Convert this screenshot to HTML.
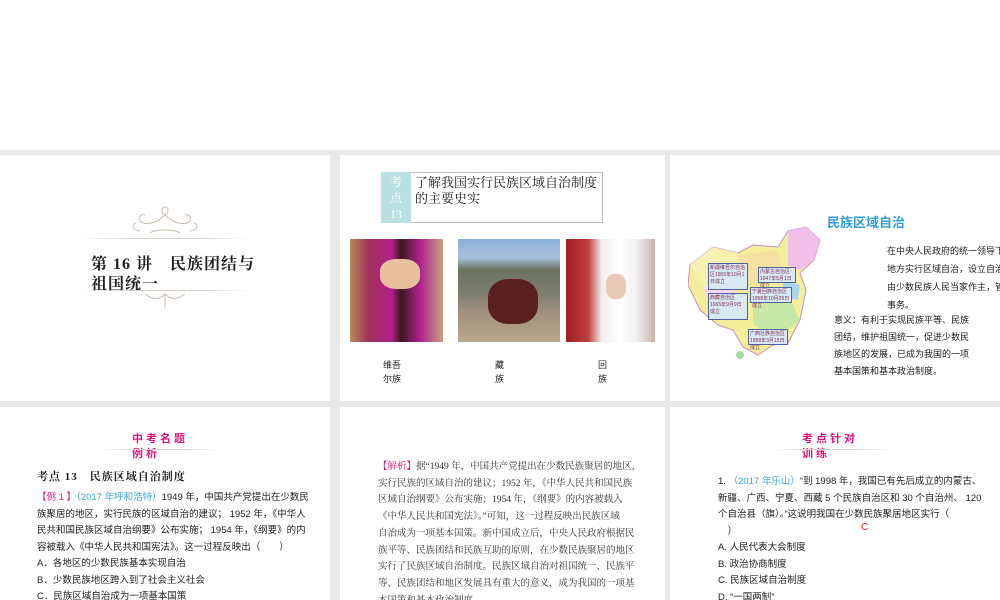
<!DOCTYPE html>
<html><head><meta charset="utf-8"><style>
*{margin:0;padding:0;box-sizing:border-box}
body{width:1000px;height:600px;background:#e8e8e8;position:relative;overflow:hidden;font-family:"Liberation Sans","Noto Sans CJK SC",sans-serif;color:#222}
.s{position:absolute;background:#fff;overflow:hidden}
.a{position:absolute;white-space:nowrap}
.serif{font-family:"Liberation Serif","Noto Serif CJK SC",serif}
.line{position:absolute;height:1px;background:linear-gradient(90deg,transparent,#d8cfc4 30%,#d8cfc4 70%,transparent)}
.mag{color:#e0157a;font-weight:bold;letter-spacing:3px}
.bx{position:absolute;border:1px solid #5060a0;background:#d8e8f4;font-size:5px;color:#803050;line-height:7px;padding:1px;white-space:normal}
</style></head><body>
<div class="s" style="left:0;top:0;width:1000px;height:150px"></div>

<!-- slide 1 -->
<div class="s" style="left:0;top:155px;width:330px;height:246px">
  <svg class="a" style="left:120px;top:48px" width="90" height="35" viewBox="0 0 90 35" fill="none" stroke="#c9bcb0" stroke-width="1">
    <path d="M45 4c-4 0-4 6 0 8c4-2 4-8 0-8M45 12c-6 6-14 10-22 8c-6-2-4-10 2-8M45 12c6 6 14 10 22 8c6-2 4-10-2-8M20 28c-6 0-10-6-4-8M70 28c6 0 10-6 4-8M30 30c5-4 25-4 30 0"/>
  </svg>
  <div class="line" style="left:80px;top:83px;width:172px"></div>
  <div class="a serif" style="left:91px;top:96px;font-size:16px;font-weight:bold;letter-spacing:1px">第 16 讲　民族团结与</div>
  <div class="a serif" style="left:91px;top:116px;font-size:16px;font-weight:bold;letter-spacing:1px">祖国统一</div>
  <div class="line" style="left:80px;top:135px;width:172px"></div>
  <svg class="a" style="left:140px;top:137px" width="50" height="20" viewBox="0 0 50 20" fill="none" stroke="#c9bcb0"><path d="M5 2c8 6 14 6 20 0c6 6 12 6 20 0M25 2v14"/></svg>
</div>

<!-- slide 2 -->
<div class="s" style="left:340px;top:155px;width:325px;height:246px">
  <div class="a" style="left:41px;top:17px;width:222px;height:51px;border:1px solid #bbb"></div>
  <div class="a serif" style="left:41px;top:17px;width:30px;height:51px;background:#b9e0e3;color:#fff;font-size:12px;text-align:center;line-height:16px;padding-top:2px">考<br>点<br>13</div>
  <div class="a serif" style="left:75px;top:20px;font-size:13px;line-height:16px">了解我国实行民族区域自治制度<br>的主要史实</div>
  <div class="a" style="left:10px;top:84px;width:93px;height:103px;background:linear-gradient(90deg,#b88a5a 0%,#a0305a 20%,#b0208a 45%,#3a1a1a 55%,#b02090 75%,#c8a080 100%)"><div class="a" style="left:30px;top:20px;width:40px;height:30px;background:#e8c0a0;border-radius:40%"></div></div>
  <div class="a" style="left:118px;top:84px;width:102px;height:103px;background:linear-gradient(180deg,#8ab0d8 0%,#a8c0d8 18%,#6a7060 30%,#808070 55%,#a09080 70%,#b8a88c 100%)"><div class="a" style="left:30px;top:40px;width:50px;height:45px;background:#5a2020;border-radius:40%"></div></div>
  <div class="a" style="left:226px;top:84px;width:89px;height:103px;background:linear-gradient(90deg,#a02020 0%,#c04040 25%,#eee 40%,#fff 60%,#f0eeee 80%,#c8b0a8 100%)"><div class="a" style="left:40px;top:35px;width:20px;height:25px;background:#e8c8b8;border-radius:40%"></div></div>
  <div class="a" style="left:43px;top:203px;font-size:9px;line-height:14px">维吾<br>尔族</div>
  <div class="a" style="left:155px;top:203px;font-size:9px;line-height:14px">藏<br>族</div>
  <div class="a" style="left:258px;top:203px;font-size:9px;line-height:14px">回<br>族</div>
</div>

<!-- slide 3 -->
<div class="s" style="left:670px;top:155px;width:330px;height:246px">
  <svg class="a" style="left:18px;top:70px" width="135" height="135" viewBox="0 0 135 135">
    <path d="M2 40 L25 22 L50 28 L65 20 L90 22 L100 6 L118 2 L132 15 L126 35 L112 48 L118 65 L112 95 L100 118 L85 120 L70 130 L55 122 L45 105 L30 100 L12 85 L0 60 Z" fill="#f4ee9a" stroke="#c890c0"/>
    <path d="M100 6 L118 2 L132 15 L126 35 L112 45 L100 40 Z" fill="#f0c0e8"/>
    <path d="M2 40 L25 22 L50 28 L45 60 L15 62 Z" fill="#f8f0b0"/>
    <path d="M65 75 L100 70 L112 95 L90 112 L65 100 Z" fill="#c8e8a8"/>
    <path d="M15 62 L45 60 L50 88 L25 90 Z" fill="#f8d8f0"/>
    <path d="M50 30 L90 25 L95 55 L60 60 Z" fill="#f4e0a0"/>
    <path d="M95 55 L112 60 L110 75 L95 72 Z" fill="#a8d8f0"/>
    <circle cx="52" cy="130" r="4" fill="#a8d8a8"/>
  </svg>
  <div class="bx" style="left:38px;top:108px;width:40px;height:27px">新疆维吾尔自治区1955年10月1日成立</div>
  <div class="bx" style="left:38px;top:138px;width:40px;height:27px">西藏自治区1965年9月9日成立</div>
  <div class="bx" style="left:88px;top:112px;width:38px;height:16px">内蒙古自治区1947年5月1日成立</div>
  <div class="bx" style="left:80px;top:132px;width:42px;height:16px">宁夏回族自治区1958年10月25日成立</div>
  <div class="bx" style="left:78px;top:174px;width:40px;height:16px">广西壮族自治区1958年3月15日成立</div>
  <div class="a" style="left:157px;top:57px;font-size:13px;font-weight:bold;color:#2f9fd6">民族区域自治</div>
  <div class="a" style="left:217px;top:87px;font-size:9px;line-height:18px">在中央人民政府的统一领导下，<br>地方实行区域自治，设立自治机关，<br>由少数民族人民当家作主，管理本<br>事务。</div>
  <div class="a" style="left:164px;top:157px;font-size:9px;line-height:17px">意义：有利于实现民族平等、民族<br>团结，维护祖国统一，促进少数民<br>族地区的发展，已成为我国的一项<br>基本国策和基本政治制度。</div>
</div>

<!-- slide 4 -->
<div class="s" style="left:0;top:407px;width:330px;height:193px">
  <div class="a mag" style="left:132px;top:25px;font-size:11px;line-height:15px">中考名题<br>例析</div>
  <div class="line" style="left:100px;top:42px;width:122px"></div>
  <div class="a serif" style="left:37px;top:61px;font-size:11px;font-weight:bold;letter-spacing:1px">考点 13　民族区域自治制度</div>
  <div class="a" style="left:37px;top:83px;font-size:9.5px;line-height:16.5px"><span style="color:#e0157a">【例 1 】</span><span style="color:#3aa8d8">（2017 年呼和浩特）</span>1949 年，中国共产党提出在少数民<br>族聚居的地区，实行民族的区域自治的建议； 1952 年，《中华人<br>民共和国民族区域自治纲要》公布实施； 1954 年，《纲要》的内<br>容被载入《中华人民共和国宪法》。这一过程反映出（　　）<br>A．各地区的少数民族基本实现自治<br>B．少数民族地区跨入到了社会主义社会<br>C．民族区域自治成为一项基本国策</div>
</div>

<!-- slide 5 -->
<div class="s" style="left:340px;top:407px;width:325px;height:193px">
  <div class="a serif" style="left:38px;top:52px;font-size:9.5px;line-height:16.7px;color:#333"><span style="color:#e0157a">【解析】</span>据“1949 年，中国共产党提出在少数民族聚居的地区，<br>实行民族的区域自治的建议；1952 年，《中华人民共和国民族<br>区域自治纲要》公布实施；1954 年，《纲要》的内容被载入<br>《中华人民共和国宪法》。”可知，这一过程反映出民族区域<br>自治成为一项基本国策。新中国成立后，中央人民政府根据民<br>族平等、民族团结和民族互助的原则，在少数民族聚居的地区<br>实行了民族区域自治制度。民族区域自治对祖国统一、民族平<br>等、民族团结和地区发展具有重大的意义，成为我国的一项基<br>本国策和基本政治制度。</div>
</div>

<!-- slide 6 -->
<div class="s" style="left:670px;top:407px;width:330px;height:193px">
  <div class="a mag" style="left:132px;top:25px;font-size:11px;line-height:15px">考点针对<br>训练</div>
  <div class="line" style="left:100px;top:42px;width:122px"></div>
  <div class="a" style="left:48px;top:67px;font-size:9.5px;line-height:16.5px">1. <span style="color:#3aa8d8">（2017 年乐山）</span>“到 1998 年，我国已有先后成立的内蒙古、<br>新疆、广西、宁夏、西藏 5 个民族自治区和 30 个自治州、 120<br>个自治县（旗）。”这说明我国在少数民族聚居地区实行（<br>　）<br>A. 人民代表大会制度<br>B. 政治协商制度<br>C. 民族区域自治制度<br>D. “一国两制”</div>
  <div class="a" style="left:191px;top:115px;font-size:10px;color:#e02020">C</div>
</div>
</body></html>
